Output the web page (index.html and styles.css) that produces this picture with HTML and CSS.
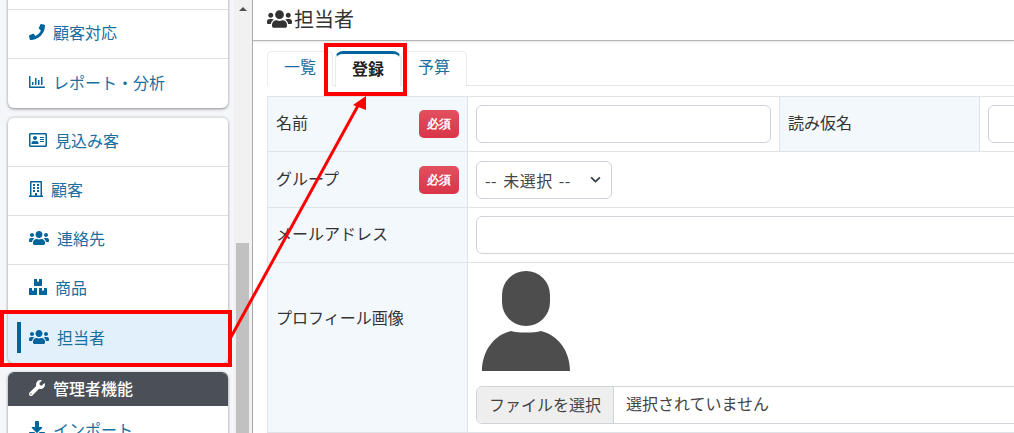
FILE: index.html
```html
<!DOCTYPE html>
<html lang="ja">
<head>
    <meta charset="UTF-8">
    <meta name="viewport" content="width=device-width, initial-scale=1.0">
    <title>担当者</title>
    <link rel="stylesheet" href="styles.css">
</head>
<body>

    <svg class="icon-defs" width="0" height="0">
        <symbol id="i-users" viewBox="0 0 640 512"><path d="M96 224c35.3 0 64-28.7 64-64s-28.7-64-64-64-64 28.7-64 64 28.7 64 64 64zm448 0c35.3 0 64-28.7 64-64s-28.7-64-64-64-64 28.7-64 64 28.7 64 64 64zm32 32h-64c-17.6 0-33.5 7.1-45.1 18.6 40.3 22.1 68.9 62 75.1 109.4h66c17.7 0 32-14.3 32-32v-32c0-35.3-28.7-64-64-64zm-256 0c61.9 0 112-50.1 112-112S381.9 32 320 32 208 82.1 208 144s50.1 112 112 112zm76.8 32h-8.3c-20.8 10-43.9 16-68.5 16s-47.6-6-68.5-16h-8.3C179.6 288 128 339.6 128 403.2V432c0 26.5 21.5 48 48 48h288c26.5 0 48-21.5 48-48v-28.8c0-63.6-51.6-115.2-115.2-115.2zm-223.7-13.4C161.5 263.1 145.6 256 128 256H64c-35.3 0-64 28.7-64 64v32c0 17.7 14.3 32 32 32h65.9c6.3-47.4 34.9-87.3 75.2-109.4z"/></symbol>
        <symbol id="i-phone" viewBox="0 0 512 512"><path d="M493.4 24.6l-104-24c-11.3-2.6-22.9 3.3-27.5 13.9l-48 112c-4.2 9.8-1.4 21.3 6.9 28l60.6 49.6c-36 76.7-98.9 140.5-177.2 177.2l-49.6-60.6c-6.8-8.3-18.2-11.1-28-6.9l-112 48C3.9 366.5-2 378.1.6 389.4l24 104C27.1 504.2 36.7 512 48 512c256.1 0 464-207.5 464-464 0-11.2-7.7-20.9-18.6-23.4z"/></symbol>
        <symbol id="i-chart" viewBox="0 0 512 512"><path d="M396.8 352h22.4c6.4 0 12.8-6.4 12.8-12.8V108.8c0-6.4-6.4-12.8-12.8-12.8h-22.4c-6.4 0-12.8 6.4-12.8 12.8v230.4c0 6.4 6.4 12.8 12.8 12.8zm-192 0h22.4c6.4 0 12.8-6.4 12.8-12.8V140.8c0-6.4-6.4-12.8-12.8-12.8h-22.4c-6.4 0-12.8 6.4-12.8 12.8v198.4c0 6.4 6.4 12.8 12.8 12.8zm96 0h22.4c6.4 0 12.8-6.4 12.8-12.8V204.8c0-6.4-6.4-12.8-12.8-12.8h-22.4c-6.4 0-12.8 6.4-12.8 12.8v134.4c0 6.4 6.4 12.8 12.8 12.8zM496 400H48V80c0-8.84-7.16-16-16-16H16C7.16 64 0 71.16 0 80v336c0 17.67 14.33 32 32 32h464c8.84 0 16-7.16 16-16v-16c0-8.84-7.16-16-16-16zm-387.2-48h22.4c6.4 0 12.8-6.4 12.8-12.8v-70.4c0-6.4-6.4-12.8-12.8-12.8h-22.4c-6.4 0-12.8 6.4-12.8 12.8v70.4c0 6.4 6.4 12.8 12.8 12.8z"/></symbol>
        <symbol id="i-card" viewBox="0 0 576 512"><path d="M528 32H48C21.5 32 0 53.5 0 80v352c0 26.5 21.5 48 48 48h480c26.5 0 48-21.5 48-48V80c0-26.5-21.5-48-48-48zm-6 400H54c-3.3 0-6-2.7-6-6V86c0-3.3 2.7-6 6-6h468c3.3 0 6 2.7 6 6v340c0 3.3-2.7 6-6 6zM192 256c35.3 0 64-28.7 64-64s-28.7-64-64-64-64 28.7-64 64 28.7 64 64 64zm-89.6 128h179.2c12.4 0 22.4-8.6 22.4-19.2v-19.2c0-31.8-30.1-57.6-67.2-57.6-10.8 0-18.7 8-44.8 8-26.9 0-33.4-8-44.8-8-37.1 0-67.2 25.8-67.2 57.6v19.2c0 10.6 10 19.2 22.4 19.2zM360 320h112c4.4 0 8-3.6 8-8v-16c0-4.4-3.6-8-8-8H360c-4.4 0-8 3.6-8 8v16c0 4.4 3.6 8 8 8zm0-64h112c4.4 0 8-3.6 8-8v-16c0-4.4-3.6-8-8-8H360c-4.4 0-8 3.6-8 8v16c0 4.4 3.6 8 8 8zm0-64h112c4.4 0 8-3.6 8-8v-16c0-4.4-3.6-8-8-8H360c-4.4 0-8 3.6-8 8v16c0 4.4 3.6 8 8 8z"/></symbol>
        <symbol id="i-building" viewBox="0 0 448 512"><path d="M128 148v-40c0-6.6 5.4-12 12-12h40c6.6 0 12 5.4 12 12v40c0 6.6-5.4 12-12 12h-40c-6.6 0-12-5.4-12-12zm140 12h40c6.6 0 12-5.4 12-12v-40c0-6.6-5.4-12-12-12h-40c-6.6 0-12 5.4-12 12v40c0 6.6 5.4 12 12 12zm-128 96h40c6.6 0 12-5.4 12-12v-40c0-6.6-5.4-12-12-12h-40c-6.6 0-12 5.4-12 12v40c0 6.6 5.4 12 12 12zm128 0h40c6.6 0 12-5.4 12-12v-40c0-6.6-5.4-12-12-12h-40c-6.6 0-12 5.4-12 12v40c0 6.6 5.4 12 12 12zm-76 84v-40c0-6.6-5.4-12-12-12h-40c-6.6 0-12 5.4-12 12v40c0 6.6 5.4 12 12 12h40c6.6 0 12-5.4 12-12zm76 12h40c6.6 0 12-5.4 12-12v-40c0-6.6-5.4-12-12-12h-40c-6.6 0-12 5.4-12 12v40c0 6.6 5.4 12 12 12zm180 124v36H0v-36c0-6.6 5.4-12 12-12h19.5V24c0-13.3 10.7-24 24-24h337c13.3 0 24 10.7 24 24v440H436c6.6 0 12 5.4 12 12zM79.5 463H192v-67c0-6.6 5.4-12 12-12h40c6.6 0 12 5.4 12 12v67h112.5V49L80 48l-.5 415z"/></symbol>
        <symbol id="i-boxes" viewBox="0 0 576 512"><path d="M560 288h-80v96l-32-21.3-32 21.3v-96h-80c-8.8 0-16 7.2-16 16v192c0 8.8 7.2 16 16 16h224c8.8 0 16-7.2 16-16V304c0-8.8-7.2-16-16-16zm-384-64h224c8.8 0 16-7.2 16-16V16c0-8.8-7.2-16-16-16h-80v96l-32-21.3L256 96V0h-80c-8.8 0-16 7.2-16 16v192c0 8.8 7.2 16 16 16zm64 64h-80v96l-32-21.3L96 384v-96H16c-8.8 0-16 7.2-16 16v192c0 8.8 7.2 16 16 16h224c8.8 0 16-7.2 16-16V304c0-8.8-7.2-16-16-16z"/></symbol>
        <symbol id="i-wrench" viewBox="0 0 512 512"><path d="M507.73 109.1c-2.24-9.03-13.54-12.09-20.12-5.51l-74.36 74.36-67.88-11.31-11.31-67.88 74.36-74.36c6.62-6.62 3.43-17.9-5.66-20.16-47.38-11.74-99.55.91-136.58 37.93-39.64 39.64-50.55 97.1-34.05 147.2L18.74 402.76c-24.99 24.99-24.99 65.51 0 90.5 24.99 24.99 65.51 24.99 90.5 0l213.21-213.21c50.12 16.71 107.47 5.68 147.37-34.22 37.07-37.07 49.7-89.32 37.91-136.73zM64 472c-13.25 0-24-10.75-24-24 0-13.26 10.75-24 24-24s24 10.74 24 24c0 13.25-10.75 24-24 24z"/></symbol>
        <symbol id="i-download" viewBox="0 0 512 512"><path d="M216 0h80c13.3 0 24 10.7 24 24v168h87.7c17.8 0 26.7 21.5 14.1 34.1L269.7 378.3c-7.5 7.5-19.8 7.5-27.3 0L90.1 226.1c-12.6-12.6-3.7-34.1 14.1-34.1H192V24c0-13.3 10.7-24 24-24zm296 376v112c0 13.3-10.7 24-24 24H24c-13.3 0-24-10.7-24-24V376c0-13.3 10.7-24 24-24h146.7l49 49c20.1 20.1 52.5 20.1 72.6 0l49-49H488c13.3 0 24 10.7 24 24zm-124 88c0-11-9-20-20-20s-20 9-20 20 9 20 20 20 20-9 20-20zm64 0c0-11-9-20-20-20s-20 9-20 20 9 20 20 20 20-9 20-20z"/></symbol>
    </svg>

    <div class="app">
        <aside class="sidebar">
            <div class="side-inner">
                <nav class="side-card">
                    <a class="side-link" href="#"><span>&nbsp;</span></a>
                    <a class="side-link" href="#"><svg class="icon w16"><use href="#i-phone"/></svg>顧客対応</a>
                    <a class="side-link" href="#"><svg class="icon w16"><use href="#i-chart"/></svg>レポート・分析</a>
                </nav>
                <nav class="side-card">
                    <a class="side-link" href="#"><svg class="icon w18"><use href="#i-card"/></svg>見込み客</a>
                    <a class="side-link" href="#"><svg class="icon w14"><use href="#i-building"/></svg>顧客</a>
                    <a class="side-link" href="#"><svg class="icon w20"><use href="#i-users"/></svg>連絡先</a>
                    <a class="side-link" href="#"><svg class="icon w18"><use href="#i-boxes"/></svg>商品</a>
                    <a class="side-link active" href="#"><svg class="icon w20"><use href="#i-users"/></svg>担当者</a>
                </nav>
                <nav class="side-card admin">
                    <div class="side-head"><svg class="icon w16"><use href="#i-wrench"/></svg>管理者機能</div>
                    <a class="side-link" href="#"><svg class="icon w16"><use href="#i-download"/></svg>インポート</a>
                </nav>
            </div>
        </aside>

        <div class="scrollbar">
            <div class="scroll-up"></div>
            <div class="scroll-thumb"></div>
        </div>

        <main class="main">
            <div class="title-bar">
                <svg class="title-icon"><use href="#i-users"/></svg><span class="title-text">担当者</span>
            </div>
            <div class="content">
                <ul class="tabs">
                    <li class="tab"><a href="#">一覧</a></li>
                    <li class="tab active"><a href="#">登録</a></li>
                    <li class="tab"><a href="#">予算</a></li>
                </ul>
                <table class="form-table">
                    <colgroup>
                        <col class="col-label">
                        <col class="col-field">
                        <col class="col-label">
                        <col class="col-field">
                    </colgroup>
                    <tr class="row-short">
                        <th><div class="label-wrap"><span class="label-text">名前</span><span class="badge">必須</span></div></th>
                        <td><input class="input" type="text"></td>
                        <th><span class="label-text">読み仮名</span></th>
                        <td><input class="input" type="text"></td>
                    </tr>
                    <tr>
                        <th><div class="label-wrap"><span class="label-text">グループ</span><span class="badge">必須</span></div></th>
                        <td colspan="3">
                            <select class="select">
                                <option>-- 未選択 --</option>
                            </select>
                        </td>
                    </tr>
                    <tr class="row-short">
                        <th><span class="label-text">メールアドレス</span></th>
                        <td colspan="3"><input class="input" type="text"></td>
                    </tr>
                    <tr class="row-photo">
                        <th><span class="label-text">プロフィール画像</span></th>
                        <td colspan="3">
                            <svg class="avatar" viewBox="0 0 88 100">
                                <rect x="20" y="0" width="48" height="55" rx="24" ry="24"/>
                                <path d="M0 100C0 80 12 64 29 60 36 62 52 62 59 60 76 64 88 80 88 100Z"/>
                            </svg>
                            <div class="file-box">
                                <span class="file-btn">ファイルを選択</span>
                                <span class="file-name">選択されていません</span>
                            </div>
                        </td>
                    </tr>
                </table>
            </div>
        </main>
    </div>

    <!-- annotations drawn over the screenshot -->
    <div class="mark mark-side"></div>
    <div class="mark mark-tab"></div>
    <svg class="arrow" width="1014" height="433">
        <line x1="231" y1="337" x2="360" y2="102"/>
        <polygon points="366,96 366,110 353,105"/>
    </svg>

</body>
</html>
```

FILE: styles.css
```css
* {
    box-sizing: border-box;
}

html, body {
    margin: 0;
    padding: 0;
    height: 100%;
    overflow: hidden;
    font-size: 16px;
    font-family: "Noto Sans CJK JP", "Noto Sans", sans-serif;
    color: #333;
    background-color: #fff;
}

a {
    text-decoration: none;
}

.icon-defs {
    position: absolute;
}

.app {
    display: flex;
    height: 433px;
}

/* sidebar */
.sidebar {
    width: 234px;
    flex-shrink: 0;
    overflow: hidden;
    background-color: #f4f6f9;
}

.side-inner {
    margin-top: -40px;
    padding: 0 6px 0 8px;
}

.side-card {
    margin-bottom: 9px;
    background-color: #fff;
    border-top: 1px solid #e0e0e0;
    border-radius: 6px;
    box-shadow: 0 1px 3px rgba(0, 0, 0, 0.45);
    overflow: hidden;
}

.side-card.admin {
    border-top-color: #4b5058;
}

.side-link {
    position: relative;
    display: flex;
    align-items: center;
    gap: 8px;
    height: 49px;
    padding: 0 0 4px 21px;
    color: #1b6f9f;
    font-size: 16px;
    border-bottom: 1px solid #e0e0e0;
}

.side-card .side-link:last-child {
    border-bottom: none;
}

.side-link.active {
    background-color: #e2f0fb;
}

.side-link.active::before {
    content: "";
    position: absolute;
    left: 9px;
    top: 8px;
    width: 4px;
    height: 31px;
    background-color: #00659c;
}

.side-head {
    display: flex;
    align-items: center;
    gap: 8px;
    height: 33px;
    padding: 0 0 4px 21px;
    color: #fff;
    font-weight: 500;
    font-size: 16px;
    background-color: #4b5058;
}

.icon {
    height: 16px;
    fill: #00659c;
    flex-shrink: 0;
}

.side-head .icon {
    fill: #fff;
}

.w14 { width: 14px; }
.w16 { width: 16px; }
.w18 { width: 18px; }
.w20 { width: 20px; }

/* scrollbar */
.scrollbar {
    width: 18px;
    flex-shrink: 0;
    padding: 0 3px 0 2px;
    background-color: #f1f1f1;
}

.scroll-up {
    width: 0;
    margin: 7px auto 0;
    border-left: 4px solid transparent;
    border-right: 4px solid transparent;
    border-bottom: 4px solid #505050;
}

.scroll-thumb {
    margin-top: 232px;
    height: 190px;
    background-color: #c1c1c1;
}

/* main */
.main {
    flex: 1;
    min-width: 0;
    overflow: hidden;
    border-left: 1px solid #aaa;
}

.title-bar {
    display: flex;
    align-items: center;
    height: 41px;
    padding: 0 0 2px 14px;
    font-size: 20px;
    color: #333;
    border-bottom: 1px solid #b5b5b5;
    box-shadow: 0 1px 2px rgba(0, 0, 0, 0.1);
}

.title-text {
    padding-bottom: 2px;
}

.title-icon {
    width: 25px;
    height: 20px;
    margin-right: 2px;
    fill: #333;
}

.content {
    padding: 10px 0 0 14px;
    width: 1000px;
}

/* tabs */
.tabs {
    display: flex;
    gap: 2px;
    list-style: none;
    margin: 0 0 10px;
    padding: 0;
    height: 35px;
    border-bottom: 1px solid #e3e5e8;
}

.tab {
    width: 66px;
    height: 35px;
    border: 1px solid #e9ebee;
    border-bottom: none;
    border-radius: 5px 5px 0 0;
    background-color: #fff;
}

.tab a {
    display: block;
    text-align: center;
    line-height: 29px;
    font-size: 16px;
    color: #1b6f9f;
}

.tab.active {
    height: 36px;
    margin-right: -2px;
    position: relative;
    border-top: 3px solid #00659c;
    border-radius: 8px 8px 0 0;
}

.tab.active a {
    color: #222;
    font-weight: 700;
}

/* form table */
.form-table {
    border-collapse: collapse;
    table-layout: fixed;
    width: 1000px;
}

.col-label {
    width: 200px;
}

.col-field {
    width: 312px;
}

.form-table th,
.form-table td {
    border: 1px solid #dfe3e8;
    padding: 8px;
    height: 56px;
    font-size: 16px;
    vertical-align: middle;
}

.form-table .row-short th,
.form-table .row-short td {
    height: 55px;
}

.form-table th {
    text-align: left;
    font-weight: 400;
    background-color: #f3f8fd;
    color: #333;
}

.label-text {
    display: block;
    padding-bottom: 4px;
}

.row-photo th {
    padding-bottom: 66px;
}

.label-wrap {
    display: flex;
    align-items: center;
    justify-content: space-between;
}

.badge {
    display: block;
    width: 40px;
    height: 28px;
    line-height: 28px;
    text-align: center;
    color: #fff;
    font-size: 12px;
    font-weight: 700;
    font-family: "Liberation Serif", serif;
    border-radius: 5px;
    background: linear-gradient(#e2505f, #d9344a);
}

.input {
    display: block;
    width: 100%;
    height: 38px;
    border: 1px solid #ced4da;
    border-radius: 6px;
    background-color: #fff;
}

.select {
    display: block;
    width: 136px;
    height: 38px;
    padding: 0 8px;
    appearance: none;
    -webkit-appearance: none;
    border: 1px solid #ced4da;
    border-radius: 6px;
    color: #444;
    font-size: 16px;
    letter-spacing: 0.5px;
    word-spacing: 2px;
    font-family: inherit;
    background: #fff url("data:image/svg+xml,%3Csvg xmlns='http://www.w3.org/2000/svg' viewBox='0 0 10 6'%3E%3Cpath d='M1 1l4 4 4-4' fill='none' stroke='%23343a40' stroke-width='1.5'/%3E%3C/svg%3E") no-repeat right 10px center / 11px 7px;
}

.avatar {
    display: block;
    width: 88px;
    height: 100px;
    margin: 0 0 15px 6px;
    fill: #4d4d4d;
}

.file-box {
    display: flex;
    align-items: center;
    height: 38px;
    border: 1px solid #ced4da;
    border-radius: 6px;
    overflow: hidden;
    color: #444;
}

.file-btn {
    display: flex;
    align-items: center;
    height: 100%;
    padding: 0 12px 2px;
    background-color: #eee;
    border-right: 1px solid #ced4da;
}

.file-name {
    padding: 0 0 4px 12px;
}

/* red annotations */
.mark {
    position: absolute;
    border: 4px solid #f00;
    pointer-events: none;
}

.mark-side {
    left: 0;
    top: 310px;
    width: 232px;
    height: 57px;
}

.mark-tab {
    left: 324px;
    top: 43px;
    width: 83px;
    height: 53px;
}

.arrow {
    position: absolute;
    left: 0;
    top: 0;
    pointer-events: none;
}

.arrow line {
    stroke: #f00;
    stroke-width: 3;
}

.arrow polygon {
    fill: #f00;
}
```
